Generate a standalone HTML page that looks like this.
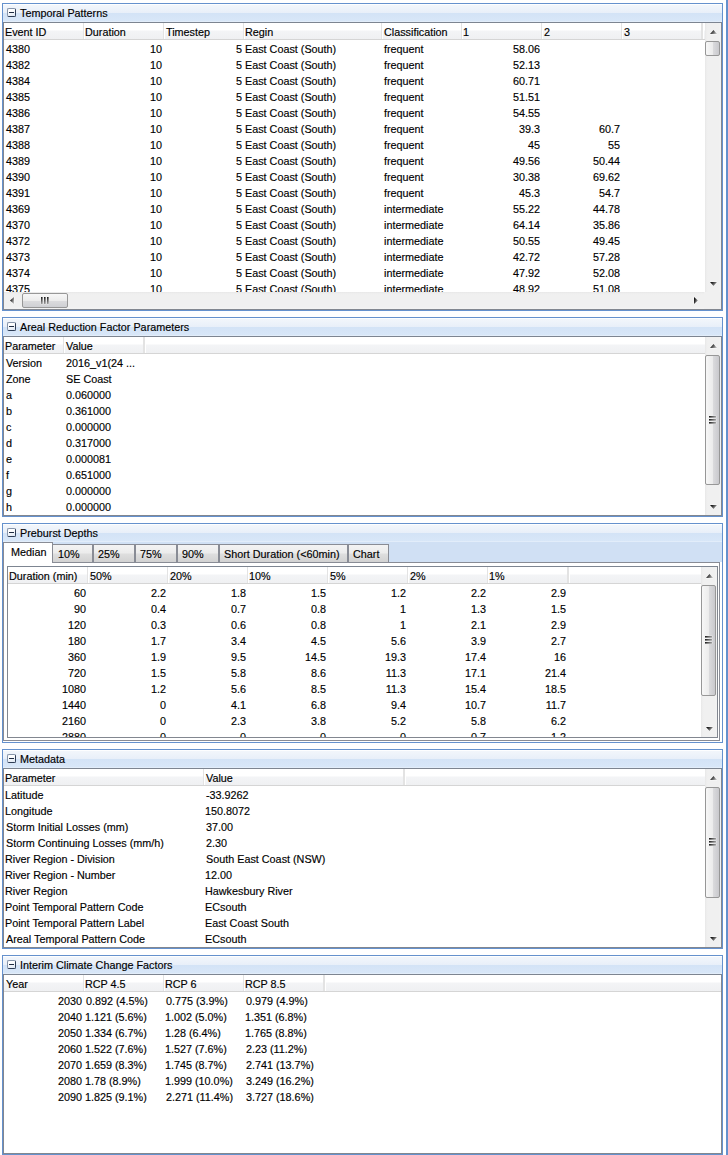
<!DOCTYPE html>
<html><head><meta charset="utf-8"><style>
html,body{margin:0;padding:0;}
body{width:728px;height:1155px;position:relative;overflow:hidden;background:#fff;font-family:"Liberation Sans",sans-serif;font-size:10.8px;color:#000;}
.a{position:absolute;}
.t{position:absolute;line-height:16px;height:16px;white-space:nowrap;-webkit-text-stroke:0.15px #000;}
</style></head><body>
<div class="a" style="left:2px;top:3px;width:721px;height:308px;box-sizing:border-box;border:1px solid #6591cd;background:#fff"></div>
<div class="a" style="left:3px;top:4px;width:719px;height:18px;background:linear-gradient(#fdfeff 0px,#fdfeff 1px,#f2f6fb 1px,#e8eff9 9px,#d3e3f6 9px,#d8e7f8 17px,#e2edfa 17px)"></div>
<div class="a" style="left:7px;top:8px;width:9px;height:9px;box-sizing:border-box;border:1px solid #2e3d55;border-top-color:#8795aa;border-left-color:#8795aa;border-radius:2px;background:linear-gradient(160deg,#ffffff 30%,#dde6f2)"></div>
<div class="a" style="left:9px;top:12px;width:5px;height:1px;background:#1f2c42"></div>
<div class="t" style="left:20px;top:5px;color:#000">Temporal Patterns</div>
<div class="a" style="left:3px;top:22px;width:719px;height:288px;box-sizing:border-box;border:1px solid #828790;border-top-color:#7d8591;background:#fff"></div>
<div class="a" style="left:4px;top:23px;width:717px;height:16px;background:linear-gradient(#ffffff 0px,#ffffff 7px,#f3f4f6 8px,#eff0f2 16px)"></div>
<div class="a" style="left:4px;top:39px;width:717px;height:1px;background:#d5d5d5"></div>
<div class="t" style="left:5px;top:24px;">Event ID</div>
<div class="a" style="left:83px;top:23px;width:1px;height:16px;background:#e3e3e3"></div>
<div class="a" style="left:84px;top:23px;width:1px;height:16px;background:#ffffff"></div>
<div class="t" style="left:85px;top:24px;">Duration</div>
<div class="a" style="left:163px;top:23px;width:1px;height:16px;background:#e3e3e3"></div>
<div class="a" style="left:164px;top:23px;width:1px;height:16px;background:#ffffff"></div>
<div class="t" style="left:166px;top:24px;">Timestep</div>
<div class="a" style="left:243px;top:23px;width:1px;height:16px;background:#e3e3e3"></div>
<div class="a" style="left:244px;top:23px;width:1px;height:16px;background:#ffffff"></div>
<div class="t" style="left:245px;top:24px;">Regin</div>
<div class="a" style="left:381px;top:23px;width:1px;height:16px;background:#e3e3e3"></div>
<div class="a" style="left:382px;top:23px;width:1px;height:16px;background:#ffffff"></div>
<div class="t" style="left:384px;top:24px;">Classification</div>
<div class="a" style="left:461px;top:23px;width:1px;height:16px;background:#e3e3e3"></div>
<div class="a" style="left:462px;top:23px;width:1px;height:16px;background:#ffffff"></div>
<div class="t" style="left:463px;top:24px;">1</div>
<div class="a" style="left:541px;top:23px;width:1px;height:16px;background:#e3e3e3"></div>
<div class="a" style="left:542px;top:23px;width:1px;height:16px;background:#ffffff"></div>
<div class="t" style="left:544px;top:24px;">2</div>
<div class="a" style="left:621px;top:23px;width:1px;height:16px;background:#e3e3e3"></div>
<div class="a" style="left:622px;top:23px;width:1px;height:16px;background:#ffffff"></div>
<div class="t" style="left:624px;top:24px;">3</div>
<div class="a" style="left:701px;top:23px;width:1px;height:16px;background:#e3e3e3"></div>
<div class="a" style="left:702px;top:23px;width:1px;height:16px;background:#e3e3e3"></div>
<div class="a" style="left:703px;top:23px;width:1px;height:16px;background:#ffffff"></div>
<div class="a" style="left:4px;top:40px;width:717px;height:269px;overflow:hidden">
<div class="t" style="left:2px;top:1px;">4380</div>
<div class="t" style="left:71px;top:1px;width:87px;text-align:right;">10</div>
<div class="t" style="left:151px;top:1px;width:87px;text-align:right;">5</div>
<div class="t" style="left:241px;top:1px;">East Coast (South)</div>
<div class="t" style="left:380px;top:1px;">frequent</div>
<div class="t" style="left:449px;top:1px;width:87px;text-align:right;">58.06</div>
<div class="t" style="left:2px;top:17px;">4382</div>
<div class="t" style="left:71px;top:17px;width:87px;text-align:right;">10</div>
<div class="t" style="left:151px;top:17px;width:87px;text-align:right;">5</div>
<div class="t" style="left:241px;top:17px;">East Coast (South)</div>
<div class="t" style="left:380px;top:17px;">frequent</div>
<div class="t" style="left:449px;top:17px;width:87px;text-align:right;">52.13</div>
<div class="t" style="left:2px;top:33px;">4384</div>
<div class="t" style="left:71px;top:33px;width:87px;text-align:right;">10</div>
<div class="t" style="left:151px;top:33px;width:87px;text-align:right;">5</div>
<div class="t" style="left:241px;top:33px;">East Coast (South)</div>
<div class="t" style="left:380px;top:33px;">frequent</div>
<div class="t" style="left:449px;top:33px;width:87px;text-align:right;">60.71</div>
<div class="t" style="left:2px;top:49px;">4385</div>
<div class="t" style="left:71px;top:49px;width:87px;text-align:right;">10</div>
<div class="t" style="left:151px;top:49px;width:87px;text-align:right;">5</div>
<div class="t" style="left:241px;top:49px;">East Coast (South)</div>
<div class="t" style="left:380px;top:49px;">frequent</div>
<div class="t" style="left:449px;top:49px;width:87px;text-align:right;">51.51</div>
<div class="t" style="left:2px;top:65px;">4386</div>
<div class="t" style="left:71px;top:65px;width:87px;text-align:right;">10</div>
<div class="t" style="left:151px;top:65px;width:87px;text-align:right;">5</div>
<div class="t" style="left:241px;top:65px;">East Coast (South)</div>
<div class="t" style="left:380px;top:65px;">frequent</div>
<div class="t" style="left:449px;top:65px;width:87px;text-align:right;">54.55</div>
<div class="t" style="left:2px;top:81px;">4387</div>
<div class="t" style="left:71px;top:81px;width:87px;text-align:right;">10</div>
<div class="t" style="left:151px;top:81px;width:87px;text-align:right;">5</div>
<div class="t" style="left:241px;top:81px;">East Coast (South)</div>
<div class="t" style="left:380px;top:81px;">frequent</div>
<div class="t" style="left:449px;top:81px;width:87px;text-align:right;">39.3</div>
<div class="t" style="left:529px;top:81px;width:87px;text-align:right;">60.7</div>
<div class="t" style="left:2px;top:97px;">4388</div>
<div class="t" style="left:71px;top:97px;width:87px;text-align:right;">10</div>
<div class="t" style="left:151px;top:97px;width:87px;text-align:right;">5</div>
<div class="t" style="left:241px;top:97px;">East Coast (South)</div>
<div class="t" style="left:380px;top:97px;">frequent</div>
<div class="t" style="left:449px;top:97px;width:87px;text-align:right;">45</div>
<div class="t" style="left:529px;top:97px;width:87px;text-align:right;">55</div>
<div class="t" style="left:2px;top:113px;">4389</div>
<div class="t" style="left:71px;top:113px;width:87px;text-align:right;">10</div>
<div class="t" style="left:151px;top:113px;width:87px;text-align:right;">5</div>
<div class="t" style="left:241px;top:113px;">East Coast (South)</div>
<div class="t" style="left:380px;top:113px;">frequent</div>
<div class="t" style="left:449px;top:113px;width:87px;text-align:right;">49.56</div>
<div class="t" style="left:529px;top:113px;width:87px;text-align:right;">50.44</div>
<div class="t" style="left:2px;top:129px;">4390</div>
<div class="t" style="left:71px;top:129px;width:87px;text-align:right;">10</div>
<div class="t" style="left:151px;top:129px;width:87px;text-align:right;">5</div>
<div class="t" style="left:241px;top:129px;">East Coast (South)</div>
<div class="t" style="left:380px;top:129px;">frequent</div>
<div class="t" style="left:449px;top:129px;width:87px;text-align:right;">30.38</div>
<div class="t" style="left:529px;top:129px;width:87px;text-align:right;">69.62</div>
<div class="t" style="left:2px;top:145px;">4391</div>
<div class="t" style="left:71px;top:145px;width:87px;text-align:right;">10</div>
<div class="t" style="left:151px;top:145px;width:87px;text-align:right;">5</div>
<div class="t" style="left:241px;top:145px;">East Coast (South)</div>
<div class="t" style="left:380px;top:145px;">frequent</div>
<div class="t" style="left:449px;top:145px;width:87px;text-align:right;">45.3</div>
<div class="t" style="left:529px;top:145px;width:87px;text-align:right;">54.7</div>
<div class="t" style="left:2px;top:161px;">4369</div>
<div class="t" style="left:71px;top:161px;width:87px;text-align:right;">10</div>
<div class="t" style="left:151px;top:161px;width:87px;text-align:right;">5</div>
<div class="t" style="left:241px;top:161px;">East Coast (South)</div>
<div class="t" style="left:380px;top:161px;">intermediate</div>
<div class="t" style="left:449px;top:161px;width:87px;text-align:right;">55.22</div>
<div class="t" style="left:529px;top:161px;width:87px;text-align:right;">44.78</div>
<div class="t" style="left:2px;top:177px;">4370</div>
<div class="t" style="left:71px;top:177px;width:87px;text-align:right;">10</div>
<div class="t" style="left:151px;top:177px;width:87px;text-align:right;">5</div>
<div class="t" style="left:241px;top:177px;">East Coast (South)</div>
<div class="t" style="left:380px;top:177px;">intermediate</div>
<div class="t" style="left:449px;top:177px;width:87px;text-align:right;">64.14</div>
<div class="t" style="left:529px;top:177px;width:87px;text-align:right;">35.86</div>
<div class="t" style="left:2px;top:193px;">4372</div>
<div class="t" style="left:71px;top:193px;width:87px;text-align:right;">10</div>
<div class="t" style="left:151px;top:193px;width:87px;text-align:right;">5</div>
<div class="t" style="left:241px;top:193px;">East Coast (South)</div>
<div class="t" style="left:380px;top:193px;">intermediate</div>
<div class="t" style="left:449px;top:193px;width:87px;text-align:right;">50.55</div>
<div class="t" style="left:529px;top:193px;width:87px;text-align:right;">49.45</div>
<div class="t" style="left:2px;top:209px;">4373</div>
<div class="t" style="left:71px;top:209px;width:87px;text-align:right;">10</div>
<div class="t" style="left:151px;top:209px;width:87px;text-align:right;">5</div>
<div class="t" style="left:241px;top:209px;">East Coast (South)</div>
<div class="t" style="left:380px;top:209px;">intermediate</div>
<div class="t" style="left:449px;top:209px;width:87px;text-align:right;">42.72</div>
<div class="t" style="left:529px;top:209px;width:87px;text-align:right;">57.28</div>
<div class="t" style="left:2px;top:225px;">4374</div>
<div class="t" style="left:71px;top:225px;width:87px;text-align:right;">10</div>
<div class="t" style="left:151px;top:225px;width:87px;text-align:right;">5</div>
<div class="t" style="left:241px;top:225px;">East Coast (South)</div>
<div class="t" style="left:380px;top:225px;">intermediate</div>
<div class="t" style="left:449px;top:225px;width:87px;text-align:right;">47.92</div>
<div class="t" style="left:529px;top:225px;width:87px;text-align:right;">52.08</div>
<div class="t" style="left:2px;top:241px;">4375</div>
<div class="t" style="left:71px;top:241px;width:87px;text-align:right;">10</div>
<div class="t" style="left:151px;top:241px;width:87px;text-align:right;">5</div>
<div class="t" style="left:241px;top:241px;">East Coast (South)</div>
<div class="t" style="left:380px;top:241px;">intermediate</div>
<div class="t" style="left:449px;top:241px;width:87px;text-align:right;">48.92</div>
<div class="t" style="left:529px;top:241px;width:87px;text-align:right;">51.08</div>
</div>
<div class="a" style="left:705px;top:23px;width:16px;height:269px;background:linear-gradient(90deg,#e6e6e6 0px,#ededed 1px,#f0f0f0 3px,#f0f0f0 14px,#f3f3f3 16px)"></div>
<div class="a" style="left:705px;top:41px;width:15px;height:15px;box-sizing:border-box;border:1px solid #979797;border-radius:2px;background:linear-gradient(90deg,#f7f7f7 0%,#ececec 50%,#dcdcde 51%,#c9c9cd 100%)"></div>
<div class="a" style="left:4px;top:292px;width:700px;height:17px;background:linear-gradient(#e6e6e6 0px,#ededed 1px,#f0f0f0 3px,#f0f0f0 15px,#f3f3f3 17px)"></div>
<div class="a" style="left:22px;top:293px;width:46px;height:15px;box-sizing:border-box;border:1px solid #979797;border-radius:2px;background:linear-gradient(#f7f7f7 0%,#ececec 50%,#dcdcde 51%,#cfd0d4 100%)"></div>
<div class="a" style="left:704px;top:292px;width:17px;height:17px;background:#f0f0f0"></div>
<div class="a" style="left:2px;top:317px;width:721px;height:200px;box-sizing:border-box;border:1px solid #6591cd;background:#fff"></div>
<div class="a" style="left:3px;top:318px;width:719px;height:18px;background:linear-gradient(#fdfeff 0px,#fdfeff 1px,#f2f6fb 1px,#e8eff9 9px,#d3e3f6 9px,#d8e7f8 17px,#e2edfa 17px)"></div>
<div class="a" style="left:7px;top:322px;width:9px;height:9px;box-sizing:border-box;border:1px solid #2e3d55;border-top-color:#8795aa;border-left-color:#8795aa;border-radius:2px;background:linear-gradient(160deg,#ffffff 30%,#dde6f2)"></div>
<div class="a" style="left:9px;top:326px;width:5px;height:1px;background:#1f2c42"></div>
<div class="t" style="left:20px;top:319px;color:#000">Areal Reduction Factor Parameters</div>
<div class="a" style="left:3px;top:336px;width:719px;height:180px;box-sizing:border-box;border:1px solid #828790;border-top-color:#7d8591;background:#fff"></div>
<div class="a" style="left:4px;top:337px;width:717px;height:16px;background:linear-gradient(#ffffff 0px,#ffffff 7px,#f3f4f6 8px,#eff0f2 16px)"></div>
<div class="a" style="left:4px;top:353px;width:717px;height:1px;background:#d5d5d5"></div>
<div class="t" style="left:5px;top:338px;">Parameter</div>
<div class="a" style="left:63px;top:337px;width:1px;height:16px;background:#e3e3e3"></div>
<div class="a" style="left:64px;top:337px;width:1px;height:16px;background:#ffffff"></div>
<div class="t" style="left:66px;top:338px;">Value</div>
<div class="a" style="left:143px;top:337px;width:1px;height:16px;background:#e3e3e3"></div>
<div class="a" style="left:144px;top:337px;width:1px;height:16px;background:#e3e3e3"></div>
<div class="a" style="left:145px;top:337px;width:1px;height:16px;background:#ffffff"></div>
<div class="a" style="left:4px;top:354px;width:717px;height:161px;overflow:hidden">
<div class="t" style="left:2px;top:1px;">Version</div>
<div class="t" style="left:62px;top:1px;">2016_v1(24 ...</div>
<div class="t" style="left:2px;top:17px;">Zone</div>
<div class="t" style="left:62px;top:17px;">SE Coast</div>
<div class="t" style="left:2px;top:33px;">a</div>
<div class="t" style="left:62px;top:33px;">0.060000</div>
<div class="t" style="left:2px;top:49px;">b</div>
<div class="t" style="left:62px;top:49px;">0.361000</div>
<div class="t" style="left:2px;top:65px;">c</div>
<div class="t" style="left:62px;top:65px;">0.000000</div>
<div class="t" style="left:2px;top:81px;">d</div>
<div class="t" style="left:62px;top:81px;">0.317000</div>
<div class="t" style="left:2px;top:97px;">e</div>
<div class="t" style="left:62px;top:97px;">0.000081</div>
<div class="t" style="left:2px;top:113px;">f</div>
<div class="t" style="left:62px;top:113px;">0.651000</div>
<div class="t" style="left:2px;top:129px;">g</div>
<div class="t" style="left:62px;top:129px;">0.000000</div>
<div class="t" style="left:2px;top:145px;">h</div>
<div class="t" style="left:62px;top:145px;">0.000000</div>
</div>
<div class="a" style="left:705px;top:337px;width:16px;height:178px;background:linear-gradient(90deg,#e6e6e6 0px,#ededed 1px,#f0f0f0 3px,#f0f0f0 14px,#f3f3f3 16px)"></div>
<div class="a" style="left:705px;top:355px;width:15px;height:130px;box-sizing:border-box;border:1px solid #979797;border-radius:2px;background:linear-gradient(90deg,#f7f7f7 0%,#ececec 50%,#dcdcde 51%,#c9c9cd 100%)"></div>
<div class="a" style="left:2px;top:523px;width:721px;height:220px;box-sizing:border-box;border:1px solid #6591cd;background:#fff"></div>
<div class="a" style="left:3px;top:524px;width:719px;height:18px;background:linear-gradient(#fdfeff 0px,#fdfeff 1px,#f2f6fb 1px,#e8eff9 9px,#d3e3f6 9px,#d8e7f8 17px,#e2edfa 17px)"></div>
<div class="a" style="left:7px;top:528px;width:9px;height:9px;box-sizing:border-box;border:1px solid #2e3d55;border-top-color:#8795aa;border-left-color:#8795aa;border-radius:2px;background:linear-gradient(160deg,#ffffff 30%,#dde6f2)"></div>
<div class="a" style="left:9px;top:532px;width:5px;height:1px;background:#1f2c42"></div>
<div class="t" style="left:20px;top:525px;color:#000">Preburst Depths</div>
<div class="a" style="left:3px;top:542px;width:719px;height:20px;background:#d0e0f4"></div>
<div class="a" style="left:3px;top:562px;width:717px;height:179px;box-sizing:border-box;border:1px solid #898c95;background:#fff"></div>
<div class="a" style="left:51px;top:544px;width:42px;height:18px;box-sizing:border-box;border:1px solid #898c95;border-bottom:none;background:linear-gradient(#f3f3f3 0px,#ececec 8px,#dedede 9px,#d2d2d2 17px)"></div>
<div class="t" style="left:58px;top:546px;">10%</div>
<div class="a" style="left:93px;top:544px;width:42px;height:18px;box-sizing:border-box;border:1px solid #898c95;border-bottom:none;background:linear-gradient(#f3f3f3 0px,#ececec 8px,#dedede 9px,#d2d2d2 17px)"></div>
<div class="t" style="left:98px;top:546px;">25%</div>
<div class="a" style="left:135px;top:544px;width:42px;height:18px;box-sizing:border-box;border:1px solid #898c95;border-bottom:none;background:linear-gradient(#f3f3f3 0px,#ececec 8px,#dedede 9px,#d2d2d2 17px)"></div>
<div class="t" style="left:140px;top:546px;">75%</div>
<div class="a" style="left:177px;top:544px;width:42px;height:18px;box-sizing:border-box;border:1px solid #898c95;border-bottom:none;background:linear-gradient(#f3f3f3 0px,#ececec 8px,#dedede 9px,#d2d2d2 17px)"></div>
<div class="t" style="left:182px;top:546px;">90%</div>
<div class="a" style="left:219px;top:544px;width:129px;height:18px;box-sizing:border-box;border:1px solid #898c95;border-bottom:none;background:linear-gradient(#f3f3f3 0px,#ececec 8px,#dedede 9px,#d2d2d2 17px)"></div>
<div class="t" style="left:224px;top:546px;">Short Duration (&lt;60min)</div>
<div class="a" style="left:348px;top:544px;width:41px;height:18px;box-sizing:border-box;border:1px solid #898c95;border-bottom:none;background:linear-gradient(#f3f3f3 0px,#ececec 8px,#dedede 9px,#d2d2d2 17px)"></div>
<div class="t" style="left:353px;top:546px;">Chart</div>
<div class="a" style="left:3px;top:542px;width:50px;height:21px;box-sizing:border-box;border:1px solid #898c95;border-bottom:none;background:#fff"></div>
<div class="t" style="left:11px;top:544px;">Median</div>
<div class="a" style="left:7px;top:566px;width:711px;height:172px;box-sizing:border-box;border:1px solid #828790;border-top-color:#7d8591;background:#fff"></div>
<div class="a" style="left:8px;top:567px;width:709px;height:16px;background:linear-gradient(#ffffff 0px,#ffffff 7px,#f3f4f6 8px,#eff0f2 16px)"></div>
<div class="a" style="left:8px;top:583px;width:709px;height:1px;background:#d5d5d5"></div>
<div class="t" style="left:9px;top:568px;">Duration (min)</div>
<div class="a" style="left:87px;top:567px;width:1px;height:16px;background:#e3e3e3"></div>
<div class="a" style="left:88px;top:567px;width:1px;height:16px;background:#ffffff"></div>
<div class="t" style="left:90px;top:568px;">50%</div>
<div class="a" style="left:167px;top:567px;width:1px;height:16px;background:#e3e3e3"></div>
<div class="a" style="left:168px;top:567px;width:1px;height:16px;background:#ffffff"></div>
<div class="t" style="left:170px;top:568px;">20%</div>
<div class="a" style="left:247px;top:567px;width:1px;height:16px;background:#e3e3e3"></div>
<div class="a" style="left:248px;top:567px;width:1px;height:16px;background:#ffffff"></div>
<div class="t" style="left:249px;top:568px;">10%</div>
<div class="a" style="left:327px;top:567px;width:1px;height:16px;background:#e3e3e3"></div>
<div class="a" style="left:328px;top:567px;width:1px;height:16px;background:#ffffff"></div>
<div class="t" style="left:330px;top:568px;">5%</div>
<div class="a" style="left:407px;top:567px;width:1px;height:16px;background:#e3e3e3"></div>
<div class="a" style="left:408px;top:567px;width:1px;height:16px;background:#ffffff"></div>
<div class="t" style="left:410px;top:568px;">2%</div>
<div class="a" style="left:487px;top:567px;width:1px;height:16px;background:#e3e3e3"></div>
<div class="a" style="left:488px;top:567px;width:1px;height:16px;background:#ffffff"></div>
<div class="t" style="left:489px;top:568px;">1%</div>
<div class="a" style="left:567px;top:567px;width:1px;height:16px;background:#e3e3e3"></div>
<div class="a" style="left:568px;top:567px;width:1px;height:16px;background:#e3e3e3"></div>
<div class="a" style="left:569px;top:567px;width:1px;height:16px;background:#ffffff"></div>
<div class="a" style="left:8px;top:584px;width:709px;height:153px;overflow:hidden">
<div class="t" style="left:-9px;top:1px;width:87px;text-align:right;">60</div>
<div class="t" style="left:71px;top:1px;width:87px;text-align:right;">2.2</div>
<div class="t" style="left:151px;top:1px;width:87px;text-align:right;">1.8</div>
<div class="t" style="left:231px;top:1px;width:87px;text-align:right;">1.5</div>
<div class="t" style="left:311px;top:1px;width:87px;text-align:right;">1.2</div>
<div class="t" style="left:391px;top:1px;width:87px;text-align:right;">2.2</div>
<div class="t" style="left:471px;top:1px;width:87px;text-align:right;">2.9</div>
<div class="t" style="left:-9px;top:17px;width:87px;text-align:right;">90</div>
<div class="t" style="left:71px;top:17px;width:87px;text-align:right;">0.4</div>
<div class="t" style="left:151px;top:17px;width:87px;text-align:right;">0.7</div>
<div class="t" style="left:231px;top:17px;width:87px;text-align:right;">0.8</div>
<div class="t" style="left:311px;top:17px;width:87px;text-align:right;">1</div>
<div class="t" style="left:391px;top:17px;width:87px;text-align:right;">1.3</div>
<div class="t" style="left:471px;top:17px;width:87px;text-align:right;">1.5</div>
<div class="t" style="left:-9px;top:33px;width:87px;text-align:right;">120</div>
<div class="t" style="left:71px;top:33px;width:87px;text-align:right;">0.3</div>
<div class="t" style="left:151px;top:33px;width:87px;text-align:right;">0.6</div>
<div class="t" style="left:231px;top:33px;width:87px;text-align:right;">0.8</div>
<div class="t" style="left:311px;top:33px;width:87px;text-align:right;">1</div>
<div class="t" style="left:391px;top:33px;width:87px;text-align:right;">2.1</div>
<div class="t" style="left:471px;top:33px;width:87px;text-align:right;">2.9</div>
<div class="t" style="left:-9px;top:49px;width:87px;text-align:right;">180</div>
<div class="t" style="left:71px;top:49px;width:87px;text-align:right;">1.7</div>
<div class="t" style="left:151px;top:49px;width:87px;text-align:right;">3.4</div>
<div class="t" style="left:231px;top:49px;width:87px;text-align:right;">4.5</div>
<div class="t" style="left:311px;top:49px;width:87px;text-align:right;">5.6</div>
<div class="t" style="left:391px;top:49px;width:87px;text-align:right;">3.9</div>
<div class="t" style="left:471px;top:49px;width:87px;text-align:right;">2.7</div>
<div class="t" style="left:-9px;top:65px;width:87px;text-align:right;">360</div>
<div class="t" style="left:71px;top:65px;width:87px;text-align:right;">1.9</div>
<div class="t" style="left:151px;top:65px;width:87px;text-align:right;">9.5</div>
<div class="t" style="left:231px;top:65px;width:87px;text-align:right;">14.5</div>
<div class="t" style="left:311px;top:65px;width:87px;text-align:right;">19.3</div>
<div class="t" style="left:391px;top:65px;width:87px;text-align:right;">17.4</div>
<div class="t" style="left:471px;top:65px;width:87px;text-align:right;">16</div>
<div class="t" style="left:-9px;top:81px;width:87px;text-align:right;">720</div>
<div class="t" style="left:71px;top:81px;width:87px;text-align:right;">1.5</div>
<div class="t" style="left:151px;top:81px;width:87px;text-align:right;">5.8</div>
<div class="t" style="left:231px;top:81px;width:87px;text-align:right;">8.6</div>
<div class="t" style="left:311px;top:81px;width:87px;text-align:right;">11.3</div>
<div class="t" style="left:391px;top:81px;width:87px;text-align:right;">17.1</div>
<div class="t" style="left:471px;top:81px;width:87px;text-align:right;">21.4</div>
<div class="t" style="left:-9px;top:97px;width:87px;text-align:right;">1080</div>
<div class="t" style="left:71px;top:97px;width:87px;text-align:right;">1.2</div>
<div class="t" style="left:151px;top:97px;width:87px;text-align:right;">5.6</div>
<div class="t" style="left:231px;top:97px;width:87px;text-align:right;">8.5</div>
<div class="t" style="left:311px;top:97px;width:87px;text-align:right;">11.3</div>
<div class="t" style="left:391px;top:97px;width:87px;text-align:right;">15.4</div>
<div class="t" style="left:471px;top:97px;width:87px;text-align:right;">18.5</div>
<div class="t" style="left:-9px;top:113px;width:87px;text-align:right;">1440</div>
<div class="t" style="left:71px;top:113px;width:87px;text-align:right;">0</div>
<div class="t" style="left:151px;top:113px;width:87px;text-align:right;">4.1</div>
<div class="t" style="left:231px;top:113px;width:87px;text-align:right;">6.8</div>
<div class="t" style="left:311px;top:113px;width:87px;text-align:right;">9.4</div>
<div class="t" style="left:391px;top:113px;width:87px;text-align:right;">10.7</div>
<div class="t" style="left:471px;top:113px;width:87px;text-align:right;">11.7</div>
<div class="t" style="left:-9px;top:129px;width:87px;text-align:right;">2160</div>
<div class="t" style="left:71px;top:129px;width:87px;text-align:right;">0</div>
<div class="t" style="left:151px;top:129px;width:87px;text-align:right;">2.3</div>
<div class="t" style="left:231px;top:129px;width:87px;text-align:right;">3.8</div>
<div class="t" style="left:311px;top:129px;width:87px;text-align:right;">5.2</div>
<div class="t" style="left:391px;top:129px;width:87px;text-align:right;">5.8</div>
<div class="t" style="left:471px;top:129px;width:87px;text-align:right;">6.2</div>
<div class="t" style="left:-9px;top:145px;width:87px;text-align:right;">2880</div>
<div class="t" style="left:71px;top:145px;width:87px;text-align:right;">0</div>
<div class="t" style="left:151px;top:145px;width:87px;text-align:right;">0</div>
<div class="t" style="left:231px;top:145px;width:87px;text-align:right;">0</div>
<div class="t" style="left:311px;top:145px;width:87px;text-align:right;">0</div>
<div class="t" style="left:391px;top:145px;width:87px;text-align:right;">0.7</div>
<div class="t" style="left:471px;top:145px;width:87px;text-align:right;">1.2</div>
</div>
<div class="a" style="left:701px;top:567px;width:16px;height:170px;background:linear-gradient(90deg,#e6e6e6 0px,#ededed 1px,#f0f0f0 3px,#f0f0f0 14px,#f3f3f3 16px)"></div>
<div class="a" style="left:701px;top:585px;width:15px;height:111px;box-sizing:border-box;border:1px solid #979797;border-radius:2px;background:linear-gradient(90deg,#f7f7f7 0%,#ececec 50%,#dcdcde 51%,#c9c9cd 100%)"></div>
<div class="a" style="left:2px;top:749px;width:721px;height:200px;box-sizing:border-box;border:1px solid #6591cd;background:#fff"></div>
<div class="a" style="left:3px;top:750px;width:719px;height:18px;background:linear-gradient(#fdfeff 0px,#fdfeff 1px,#f2f6fb 1px,#e8eff9 9px,#d3e3f6 9px,#d8e7f8 17px,#e2edfa 17px)"></div>
<div class="a" style="left:7px;top:754px;width:9px;height:9px;box-sizing:border-box;border:1px solid #2e3d55;border-top-color:#8795aa;border-left-color:#8795aa;border-radius:2px;background:linear-gradient(160deg,#ffffff 30%,#dde6f2)"></div>
<div class="a" style="left:9px;top:758px;width:5px;height:1px;background:#1f2c42"></div>
<div class="t" style="left:20px;top:751px;color:#000">Metadata</div>
<div class="a" style="left:3px;top:768px;width:719px;height:180px;box-sizing:border-box;border:1px solid #828790;border-top-color:#7d8591;background:#fff"></div>
<div class="a" style="left:4px;top:769px;width:717px;height:16px;background:linear-gradient(#ffffff 0px,#ffffff 7px,#f3f4f6 8px,#eff0f2 16px)"></div>
<div class="a" style="left:4px;top:785px;width:717px;height:1px;background:#d5d5d5"></div>
<div class="t" style="left:5px;top:770px;">Parameter</div>
<div class="a" style="left:203px;top:769px;width:1px;height:16px;background:#e3e3e3"></div>
<div class="a" style="left:204px;top:769px;width:1px;height:16px;background:#ffffff"></div>
<div class="t" style="left:206px;top:770px;">Value</div>
<div class="a" style="left:403px;top:769px;width:1px;height:16px;background:#e3e3e3"></div>
<div class="a" style="left:404px;top:769px;width:1px;height:16px;background:#e3e3e3"></div>
<div class="a" style="left:405px;top:769px;width:1px;height:16px;background:#ffffff"></div>
<div class="a" style="left:4px;top:786px;width:717px;height:161px;overflow:hidden">
<div class="t" style="left:1px;top:1px;">Latitude</div>
<div class="t" style="left:202px;top:1px;">-33.9262</div>
<div class="t" style="left:1px;top:17px;">Longitude</div>
<div class="t" style="left:201px;top:17px;">150.8072</div>
<div class="t" style="left:2px;top:33px;">Storm Initial Losses (mm)</div>
<div class="t" style="left:202px;top:33px;">37.00</div>
<div class="t" style="left:2px;top:49px;">Storm Continuing Losses (mm/h)</div>
<div class="t" style="left:202px;top:49px;">2.30</div>
<div class="t" style="left:1px;top:65px;">River Region - Division</div>
<div class="t" style="left:202px;top:65px;">South East Coast (NSW)</div>
<div class="t" style="left:1px;top:81px;">River Region - Number</div>
<div class="t" style="left:201px;top:81px;">12.00</div>
<div class="t" style="left:1px;top:97px;">River Region</div>
<div class="t" style="left:201px;top:97px;">Hawkesbury River</div>
<div class="t" style="left:1px;top:113px;">Point Temporal Pattern Code</div>
<div class="t" style="left:201px;top:113px;">ECsouth</div>
<div class="t" style="left:1px;top:129px;">Point Temporal Pattern Label</div>
<div class="t" style="left:201px;top:129px;">East Coast South</div>
<div class="t" style="left:2px;top:145px;">Areal Temporal Pattern Code</div>
<div class="t" style="left:201px;top:145px;">ECsouth</div>
</div>
<div class="a" style="left:705px;top:769px;width:16px;height:178px;background:linear-gradient(90deg,#e6e6e6 0px,#ededed 1px,#f0f0f0 3px,#f0f0f0 14px,#f3f3f3 16px)"></div>
<div class="a" style="left:705px;top:787px;width:15px;height:111px;box-sizing:border-box;border:1px solid #979797;border-radius:2px;background:linear-gradient(90deg,#f7f7f7 0%,#ececec 50%,#dcdcde 51%,#c9c9cd 100%)"></div>
<div class="a" style="left:2px;top:955px;width:721px;height:200px;box-sizing:border-box;border:1px solid #6591cd;background:#fff"></div>
<div class="a" style="left:3px;top:956px;width:719px;height:18px;background:linear-gradient(#fdfeff 0px,#fdfeff 1px,#f2f6fb 1px,#e8eff9 9px,#d3e3f6 9px,#d8e7f8 17px,#e2edfa 17px)"></div>
<div class="a" style="left:7px;top:960px;width:9px;height:9px;box-sizing:border-box;border:1px solid #2e3d55;border-top-color:#8795aa;border-left-color:#8795aa;border-radius:2px;background:linear-gradient(160deg,#ffffff 30%,#dde6f2)"></div>
<div class="a" style="left:9px;top:964px;width:5px;height:1px;background:#1f2c42"></div>
<div class="t" style="left:20px;top:957px;color:#000">Interim Climate Change Factors</div>
<div class="a" style="left:3px;top:974px;width:719px;height:180px;box-sizing:border-box;border:1px solid #828790;border-top-color:#7d8591;background:#fff"></div>
<div class="a" style="left:4px;top:975px;width:717px;height:16px;background:linear-gradient(#ffffff 0px,#ffffff 7px,#f3f4f6 8px,#eff0f2 16px)"></div>
<div class="a" style="left:4px;top:991px;width:717px;height:1px;background:#d5d5d5"></div>
<div class="t" style="left:6px;top:976px;">Year</div>
<div class="a" style="left:83px;top:975px;width:1px;height:16px;background:#e3e3e3"></div>
<div class="a" style="left:84px;top:975px;width:1px;height:16px;background:#ffffff"></div>
<div class="t" style="left:85px;top:976px;">RCP 4.5</div>
<div class="a" style="left:163px;top:975px;width:1px;height:16px;background:#e3e3e3"></div>
<div class="a" style="left:164px;top:975px;width:1px;height:16px;background:#ffffff"></div>
<div class="t" style="left:165px;top:976px;">RCP 6</div>
<div class="a" style="left:243px;top:975px;width:1px;height:16px;background:#e3e3e3"></div>
<div class="a" style="left:244px;top:975px;width:1px;height:16px;background:#ffffff"></div>
<div class="t" style="left:245px;top:976px;">RCP 8.5</div>
<div class="a" style="left:323px;top:975px;width:1px;height:16px;background:#e3e3e3"></div>
<div class="a" style="left:324px;top:975px;width:1px;height:16px;background:#e3e3e3"></div>
<div class="a" style="left:325px;top:975px;width:1px;height:16px;background:#ffffff"></div>
<div class="a" style="left:4px;top:992px;width:717px;height:161px;overflow:hidden">
<div class="t" style="left:-9px;top:1px;width:87px;text-align:right;">2030</div>
<div class="t" style="left:82px;top:1px;">0.892 (4.5%)</div>
<div class="t" style="left:162px;top:1px;">0.775 (3.9%)</div>
<div class="t" style="left:242px;top:1px;">0.979 (4.9%)</div>
<div class="t" style="left:-9px;top:17px;width:87px;text-align:right;">2040</div>
<div class="t" style="left:81px;top:17px;">1.121 (5.6%)</div>
<div class="t" style="left:161px;top:17px;">1.002 (5.0%)</div>
<div class="t" style="left:241px;top:17px;">1.351 (6.8%)</div>
<div class="t" style="left:-9px;top:33px;width:87px;text-align:right;">2050</div>
<div class="t" style="left:81px;top:33px;">1.334 (6.7%)</div>
<div class="t" style="left:161px;top:33px;">1.28 (6.4%)</div>
<div class="t" style="left:241px;top:33px;">1.765 (8.8%)</div>
<div class="t" style="left:-9px;top:49px;width:87px;text-align:right;">2060</div>
<div class="t" style="left:81px;top:49px;">1.522 (7.6%)</div>
<div class="t" style="left:161px;top:49px;">1.527 (7.6%)</div>
<div class="t" style="left:242px;top:49px;">2.23 (11.2%)</div>
<div class="t" style="left:-9px;top:65px;width:87px;text-align:right;">2070</div>
<div class="t" style="left:81px;top:65px;">1.659 (8.3%)</div>
<div class="t" style="left:161px;top:65px;">1.745 (8.7%)</div>
<div class="t" style="left:242px;top:65px;">2.741 (13.7%)</div>
<div class="t" style="left:-9px;top:81px;width:87px;text-align:right;">2080</div>
<div class="t" style="left:81px;top:81px;">1.78 (8.9%)</div>
<div class="t" style="left:161px;top:81px;">1.999 (10.0%)</div>
<div class="t" style="left:242px;top:81px;">3.249 (16.2%)</div>
<div class="t" style="left:-9px;top:97px;width:87px;text-align:right;">2090</div>
<div class="t" style="left:81px;top:97px;">1.825 (9.1%)</div>
<div class="t" style="left:162px;top:97px;">2.271 (11.4%)</div>
<div class="t" style="left:242px;top:97px;">3.727 (18.6%)</div>
</div>
<div class="a" style="left:726px;top:0px;width:2px;height:1155px;background:#6591cd"></div>
<svg class="a" style="left:0;top:0" width="728" height="1155"><defs><linearGradient id="ag" x1="0" y1="0" x2="1" y2="0.5"><stop offset="0" stop-color="#000"/><stop offset="0.35" stop-color="#2a2a2a"/><stop offset="1" stop-color="#b0b0b0"/></linearGradient><linearGradient id="gv" x1="0" y1="0" x2="0" y2="1"><stop offset="0" stop-color="#1a1a1a"/><stop offset="1" stop-color="#a0a0a0"/></linearGradient><linearGradient id="gh" x1="0" y1="0" x2="1" y2="0"><stop offset="0" stop-color="#1a1a1a"/><stop offset="1" stop-color="#a0a0a0"/></linearGradient></defs><polygon points="710.0,34 717.0,34 713.5,30" fill="url(#ag)" stroke="#ffffff" stroke-opacity="0.7" stroke-width="1" paint-order="stroke"/><polygon points="710.0,282 717.0,282 713.5,286" fill="url(#ag)" stroke="#ffffff" stroke-opacity="0.7" stroke-width="1" paint-order="stroke"/><polygon points="14,297.0 14,304.0 10,300.5" fill="url(#ag)" stroke="#ffffff" stroke-opacity="0.7" stroke-width="1" paint-order="stroke"/><polygon points="694,297.0 694,304.0 698,300.5" fill="url(#ag)" stroke="#ffffff" stroke-opacity="0.7" stroke-width="1" paint-order="stroke"/><rect x="41" y="297" width="1.6" height="7" fill="url(#gv)" stroke="#fff" stroke-opacity="0.6" stroke-width="0.8" paint-order="stroke"/><rect x="44" y="297" width="1.6" height="7" fill="url(#gv)" stroke="#fff" stroke-opacity="0.6" stroke-width="0.8" paint-order="stroke"/><rect x="47" y="297" width="1.6" height="7" fill="url(#gv)" stroke="#fff" stroke-opacity="0.6" stroke-width="0.8" paint-order="stroke"/><polygon points="710.0,348 717.0,348 713.5,344" fill="url(#ag)" stroke="#ffffff" stroke-opacity="0.7" stroke-width="1" paint-order="stroke"/><polygon points="710.0,505 717.0,505 713.5,509" fill="url(#ag)" stroke="#ffffff" stroke-opacity="0.7" stroke-width="1" paint-order="stroke"/><rect x="709" y="416" width="7" height="1.6" fill="url(#gh)" stroke="#fff" stroke-opacity="0.6" stroke-width="0.8" paint-order="stroke"/><rect x="709" y="419" width="7" height="1.6" fill="url(#gh)" stroke="#fff" stroke-opacity="0.6" stroke-width="0.8" paint-order="stroke"/><rect x="709" y="422" width="7" height="1.6" fill="url(#gh)" stroke="#fff" stroke-opacity="0.6" stroke-width="0.8" paint-order="stroke"/><polygon points="706.0,578 713.0,578 709.5,574" fill="url(#ag)" stroke="#ffffff" stroke-opacity="0.7" stroke-width="1" paint-order="stroke"/><polygon points="706.0,727 713.0,727 709.5,731" fill="url(#ag)" stroke="#ffffff" stroke-opacity="0.7" stroke-width="1" paint-order="stroke"/><rect x="705" y="636" width="7" height="1.6" fill="url(#gh)" stroke="#fff" stroke-opacity="0.6" stroke-width="0.8" paint-order="stroke"/><rect x="705" y="639" width="7" height="1.6" fill="url(#gh)" stroke="#fff" stroke-opacity="0.6" stroke-width="0.8" paint-order="stroke"/><rect x="705" y="642" width="7" height="1.6" fill="url(#gh)" stroke="#fff" stroke-opacity="0.6" stroke-width="0.8" paint-order="stroke"/><polygon points="710.0,780 717.0,780 713.5,776" fill="url(#ag)" stroke="#ffffff" stroke-opacity="0.7" stroke-width="1" paint-order="stroke"/><polygon points="710.0,937 717.0,937 713.5,941" fill="url(#ag)" stroke="#ffffff" stroke-opacity="0.7" stroke-width="1" paint-order="stroke"/><rect x="709" y="838" width="7" height="1.6" fill="url(#gh)" stroke="#fff" stroke-opacity="0.6" stroke-width="0.8" paint-order="stroke"/><rect x="709" y="841" width="7" height="1.6" fill="url(#gh)" stroke="#fff" stroke-opacity="0.6" stroke-width="0.8" paint-order="stroke"/><rect x="709" y="844" width="7" height="1.6" fill="url(#gh)" stroke="#fff" stroke-opacity="0.6" stroke-width="0.8" paint-order="stroke"/></svg>
</body></html>
